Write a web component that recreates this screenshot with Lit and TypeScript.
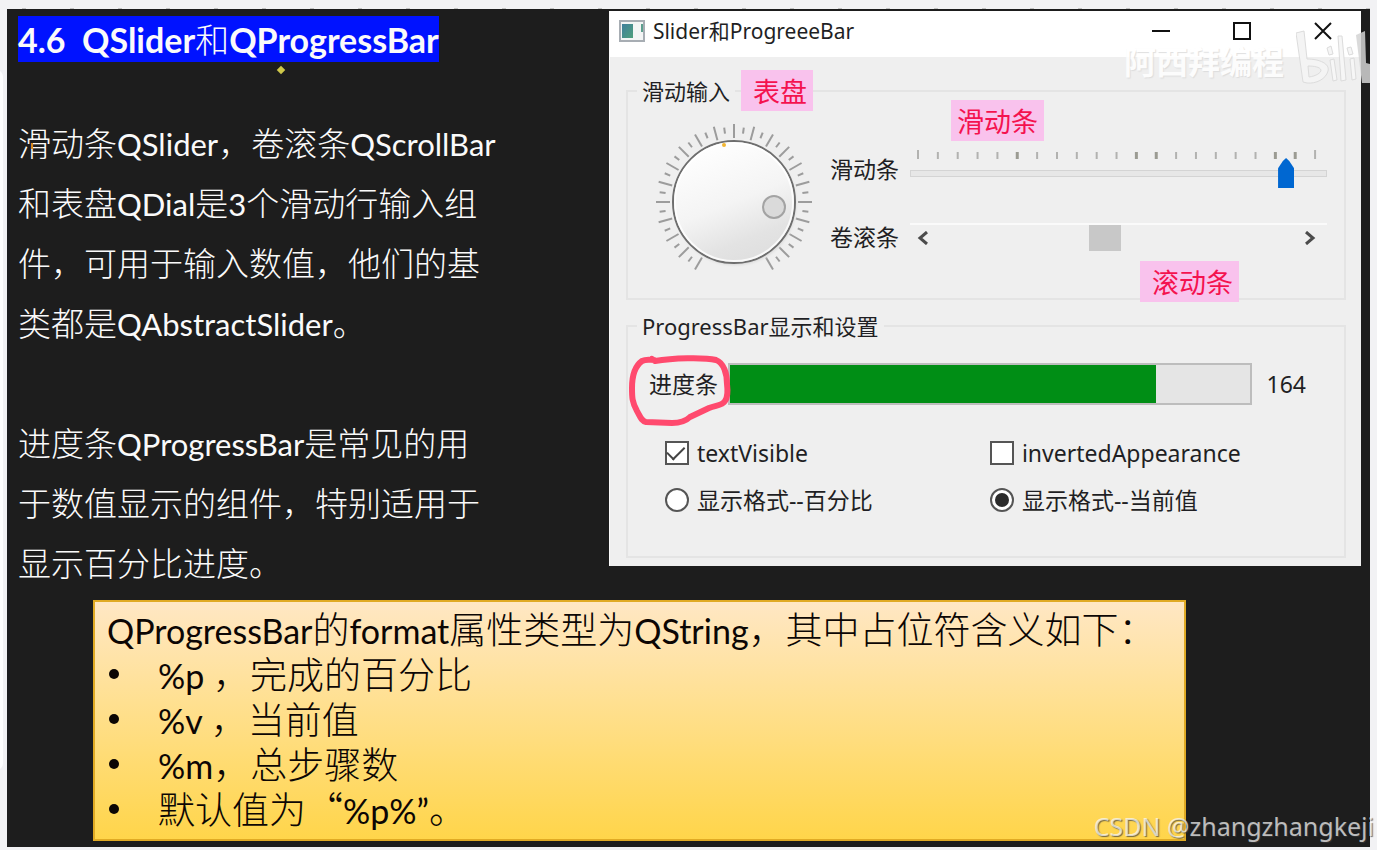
import { LitElement, html, svg, css } from "lit";
import { customElement, property } from "lit/decorators.js";

/** Wraps the Latin runs of a mixed line so that they take their own face and size. */
const mixed = (text: string) =>
  text
    .split(/([\x20-\x7e”]+)/)
    .filter((part) => part !== "")
    .map((part) => (/^[\x20-\x7e”]+$/.test(part) ? html`<span class="latin">${part}</span>` : part));

@customElement("qt-dial")
class QtDial extends LitElement {
  @property({ type: Number }) value = 0;

  static styles = css`
    :host { display: block; position: relative; width: 160px; height: 160px; }
    svg { display: block; width: 100%; height: 100%; }
    .range { position: absolute; inset: 0; width: 100%; height: 100%; margin: 0; opacity: 0; cursor: pointer; }
    .tick { stroke: #9c9c9c; stroke-width: 2; }
  `;

  render() {
    const ticks = Array.from({ length: 41 }, (_, i) => i);
    return html`
      <svg viewBox="-80 -80 160 160" aria-hidden="true">
        <defs>
          <linearGradient id="face" x1="0.3" y1="0" x2="0.7" y2="1">
            <stop offset="0" stop-color="#ffffff" />
            <stop offset="0.5" stop-color="#f4f4f4" />
            <stop offset="0.8" stop-color="#e3e3e3" />
            <stop offset="1" stop-color="#dedede" />
          </linearGradient>
          <radialGradient id="shade">
            <stop offset="0.9" stop-color="#bdbdbd" />
            <stop offset="1" stop-color="#efefef" stop-opacity="0" />
          </radialGradient>
        </defs>
        ${ticks.map(
          (i) => svg`<line class="tick" x1="0" x2="0" y1=${i % 2 ? -69 : -64} y2=${i % 2 ? -75 : -78}
            transform="rotate(${-150 + i * 7.5})" />`
        )}
        <circle cx="1" cy="2" r="64" fill="url(#shade)" />
        <circle r="61" fill="url(#face)" stroke="#6e6e6e" stroke-width="2" />
        <circle r="59" fill="none" stroke="#ffffff" stroke-width="2" opacity="0.8" />
        <circle cx="40" cy="5" r="11" fill="#dadada" stroke="#a3a3a3" stroke-width="2" />
        <circle cx="-10" cy="-57" r="2" fill="#f2b632" />
      </svg>
      <input class="range" type="range" min="0" max="200" .value=${String(this.value)} aria-label="表盘" />
    `;
  }
}

@customElement("qt-window")
class QtWindow extends LitElement {
  static styles = css`
    :host {
      display: block;
      position: relative;
      background: #efefef;
      color: #1f1f24;
      font: 23px/28px "Noto Sans", "Noto Sans CJK SC", sans-serif;
      padding-bottom: 8px;
      box-sizing: border-box;
      border-left: 1px solid #fafafa;
    }
    * { box-sizing: border-box; }
    .bar { display: flex; align-items: center; height: 46px; background: #fff; padding: 0 0 6px 9px; }
    .app-icon { width: 26px; height: 22px; margin-right: 8px; }
    .caption { flex: 1; font-size: 21px; }
    .caps { display: flex; gap: 5px; }
    .cap { width: 76px; height: 40px; padding: 0; border: 0; background: none; display: grid; place-items: center; }
    .cap svg { width: 18px; height: 18px; fill: none; stroke: #111; stroke-width: 2; }
    fieldset { margin: 0 15px 0 16px; padding: 0; border: 2px solid #e4e4e4; min-width: 0; }
    .inputs { margin-top: 20px; height: 223px; }
    .progress { margin-top: 12px; height: 246px; }
    legend { margin-left: 9px; padding: 0 5px; font-size: 22px; }
    .sliders { display: flex; gap: 16px; padding: 17px 17px 0 26px; }
    .rows { flex: 1; display: grid; grid-template-columns: auto 1fr; grid-auto-rows: 68px; column-gap: 11px; align-items: center; padding-top: 13px; min-width: 0; }
    .slider { display: grid; }
    .ticks { width: calc(100% - 20px); height: 9px; margin-left: 8px; overflow: visible; }
    .ticks line { stroke: #b2b2b0; stroke-width: 2; }
    .ticks line.bold { stroke: #9b9b92; stroke-width: 3; }
    input, progress { margin: 0; }
    .track { appearance: none; width: 100%; height: 30px; background: none; }
    .track::-webkit-slider-runnable-track { height: 7px; border: 1px solid #d4d4d4; background: #e7e7e7; }
    .track::-webkit-slider-thumb { appearance: none; width: 16px; height: 30px; margin-top: -13px; background: #0067d1; clip-path: polygon(50% 0, 70% 10%, 100% 34%, 100% 100%, 0 100%, 0 34%, 30% 10%); }
    .scroll { display: flex; height: 28px; border-top: 2px solid #fafafa; }
    .step { width: 26px; padding: 0; border: 0; background: none; display: grid; place-items: center; }
    .step.next { width: 34px; }
    .step svg { width: 12px; height: 14px; fill: none; stroke: #4b4b4b; stroke-width: 3; }
    .thumb { appearance: none; flex: 1; min-width: 0; height: 26px; background: none; }
    .thumb::-webkit-slider-thumb { appearance: none; width: 32px; height: 26px; background: #c8c8c8; }
    .meter { display: flex; align-items: center; padding: 23px 38px 0 21px; }
    .meter progress { appearance: none; flex: 1; min-width: 0; height: 42px; margin: 0 15px 0 10px; border: 2px solid #bdbdbd; background: #e5e5e5; }
    .meter progress::-webkit-progress-bar { background: #e5e5e5; }
    .meter progress::-webkit-progress-value { background: #008e15; }
    .options { display: grid; grid-template-columns: 325px 1fr; grid-auto-rows: 47px; padding: 24px 0 0 37px; }
    .option { display: flex; align-items: center; gap: 8px; }
    .box { appearance: none; width: 24px; height: 24px; border: 2px solid #555; background: #fff; display: grid; place-items: center; flex: none; }
    .box.round { border-radius: 50%; }
    .box.round:checked::before { content: ""; width: 14px; height: 14px; border-radius: 50%; background: #2b2b2b; }
    .box.square:checked::before { content: ""; width: 15px; height: 8px; border: solid #444; border-width: 0 0 2px 2px; transform: rotate(-45deg) translate(1px, -2px); }
    .note { position: absolute; background: #f9c2ed; color: #f4124f; font: 27px/41px "Noto Sans CJK SC", sans-serif; padding: 0 6px; }
    .note.wide { padding-left: 12px; }
    .note.dial { left: 131px; top: 59px; }
    .note.slide { left: 341px; top: 89px; }
    .note.scrolling { left: 530px; top: 250px; }
    .ring { position: absolute; left: 14px; top: 339px; width: 110px; height: 80px; fill: none; stroke: #ff4a6e; stroke-width: 6; stroke-linejoin: round; stroke-linecap: round; pointer-events: none; }
  `;

  render() {
    const bold = new Set([5, 11, 12, 18, 19]);
    return html`
      <header class="bar">
        <svg class="app-icon" viewBox="0 0 26 22" aria-hidden="true">
          <defs>
            <linearGradient id="pane" x1="0" y1="0" x2="1" y2="1">
              <stop offset="0" stop-color="#3f7f9c" />
              <stop offset="1" stop-color="#4fa07c" />
            </linearGradient>
          </defs>
          <rect x="1" y="1" width="24" height="20" fill="#f3f5f5" stroke="#a7adb3" stroke-width="2" />
          <rect x="3" y="4" width="11" height="14" fill="url(#pane)" />
          <rect x="22" y="4" width="2" height="8" fill="#5d9f8e" />
        </svg>
        <span class="caption">Slider和ProgreeeBar</span>
        <div class="caps">
          <button class="cap" aria-label="最小化"><svg viewBox="0 0 18 18"><path d="M0 9H18" /></svg></button>
          <button class="cap" aria-label="最大化"><svg viewBox="0 0 18 18"><rect x="1" y="1" width="16" height="16" /></svg></button>
          <button class="cap" aria-label="关闭"><svg viewBox="0 0 18 18"><path d="M1 1L17 17M17 1L1 17" /></svg></button>
        </div>
      </header>

      <fieldset class="inputs">
        <legend>滑动输入</legend>
        <div class="sliders">
          <qt-dial .value=${110}></qt-dial>
          <div class="rows">
            <label for="slider">滑动条</label>
            <div class="slider">
              <svg class="ticks" aria-hidden="true">
                ${Array.from({ length: 21 }, (_, i) => i).map(
                  (i) => svg`<line class=${bold.has(i) ? "bold" : ""} x1="${i * 5}%" x2="${i * 5}%" y1=${i % 20 ? 2 : 0} y2="9" />`
                )}
              </svg>
              <input id="slider" class="track" type="range" min="0" max="200" value="184" />
            </div>
            <label for="scroll">卷滚条</label>
            <div class="scroll">
              <button class="step" aria-label="减小"><svg viewBox="0 0 12 14"><path d="M10 1L3 7L10 13" /></svg></button>
              <input id="scroll" class="thumb" type="range" min="0" max="200" value="94" />
              <button class="step next" aria-label="增大"><svg viewBox="0 0 12 14"><path d="M2 1L9 7L2 13" /></svg></button>
            </div>
          </div>
        </div>
      </fieldset>

      <fieldset class="progress">
        <legend>ProgressBar显示和设置</legend>
        <div class="meter">
          <label for="bar">进度条</label>
          <progress id="bar" max="200" value="164"></progress>
          <output for="slider">164</output>
        </div>
        <div class="options">
          <label class="option"><input class="box square" type="checkbox" checked />textVisible</label>
          <label class="option"><input class="box square" type="checkbox" />invertedAppearance</label>
          <label class="option"><input class="box round" type="radio" name="format" />显示格式--百分比</label>
          <label class="option"><input class="box round" type="radio" name="format" checked />显示格式--当前值</label>
        </div>
      </fieldset>

      <span class="note wide dial">表盘</span>
      <span class="note slide">滑动条</span>
      <span class="note wide scrolling">滚动条</span>
      <svg class="ring" viewBox="624 350 110 80" aria-hidden="true">
        <path d="M652 359L655 361C672 358 704 357 716 360C724 363 727 374 727 384C728 392 728 397 725 401C722 406 716 405 709 408L690 417C685 422 678 423 672 423L646 422C641 421 640 416 637 411C632 402 632 397 632 388C632 377 635 366 642 361C646 359 650 360 654 360" />
      </svg>
    `;
  }
}

@customElement("app-root")
class AppRoot extends LitElement {
  static styles = css`
    :host {
      display: flex;
      position: relative;
      min-height: 100vh;
      box-sizing: border-box;
      padding: 9px 7px 3px;
      background: #f2f2f4;
      font-family: Lato, "Noto Sans CJK SC", sans-serif;
      overflow: hidden;
    }
    * { box-sizing: border-box; }
    :host::before { content: ""; position: absolute; left: -10px; top: 70px; width: 13px; height: 700px; border-radius: 10px; background: #fff; }
    :host::after { content: ""; position: absolute; left: 22px; right: 0; top: 8px; height: 1px; background: repeating-linear-gradient(90deg, #c4c4c4 0 4px, transparent 4px 48px); }
    .slide { flex: 1; min-width: 0; background: #1d1d1d; color: #fafafa; padding: 2px 9px 6px 11px; }
    .top { display: flex; justify-content: space-between; align-items: flex-start; }
    .text { font-family: "Noto Sans CJK SC", sans-serif; font-size: 33px; line-height: 60px; font-weight: 300; white-space: nowrap; }
    .latin { font-family: Lato, sans-serif; line-height: 1; white-space: pre; }
    h1 { display: table; margin: 5px 0 50px; font-size: 34px; line-height: 46px; font-weight: 300; background: #0012ff; white-space: pre; }
    h1 .latin { font-weight: 700; font-size: 34px; }
    p { margin: 0; }
    p + p { margin-top: 60px; }
    .text p .latin { font-size: 31px; font-weight: 400; }
    qt-window { width: 56%; }
    .box {
      margin: 8px 175px 0 75px;
      border: 2px solid #e0aa24;
      padding: 4px 12px 8px;
      background: linear-gradient(#ffe7c4, #ffdf8a 48%, #ffd54a);
      color: #0c0604;
      font-family: "Noto Sans CJK SC", sans-serif;
      font-size: 37px;
      line-height: 45px;
      font-weight: 300;
      white-space: nowrap;
    }
    .box .latin { font-size: 34px; font-weight: 400; }
    ul { margin: 0; padding: 0; list-style: none; }
    li { display: flex; align-items: center; }
    li::before { content: ""; width: 10px; height: 10px; border-radius: 50%; background: #0c0604; margin: 0 39px 0 2px; }
    .dot { position: absolute; left: 278px; top: 67px; width: 6px; height: 6px; background: #cfc84a; transform: rotate(45deg); }
    .speck { position: absolute; left: 31px; top: 143px; width: 2px; height: 6px; background: #d98a1c; }
    .brand { position: absolute; right: 0; top: 30px; width: 253px; display: flex; color: #fff; }
    .brand span { font: 700 32px/60px "Noto Sans CJK SC", sans-serif; opacity: 0.85; text-shadow: 1px 1px 1px #dadada; }
    .brand svg { width: 74px; height: 56px; margin-left: 12px; fill: none; }
    .credit { position: absolute; right: 3px; bottom: 9px; font: 25px/30px "Noto Sans", sans-serif; color: rgba(255, 255, 255, 0.7); text-shadow: 1px 1px 1px rgba(60, 60, 60, 0.7); }
  `;

  render() {
    const first = ["滑动条QSlider，卷滚条QScrollBar", "和表盘QDial是3个滑动行输入组", "件，可用于输入数值，他们的基", "类都是QAbstractSlider。"];
    const second = ["进度条QProgressBar是常见的用", "于数值显示的组件，特别适用于", "显示百分比进度。"];
    const items = ["%p ，完成的百分比", "%v ，当前值", "%m，总步骤数", "默认值为“%p%”。"];
    return html`
      <main class="slide">
        <div class="top">
          <section class="text">
            <h1>${mixed("4.6  QSlider和QProgressBar")}</h1>
            <p>${first.map((line) => html`${mixed(line)}<br />`)}</p>
            <p>${second.map((line) => html`${mixed(line)}<br />`)}</p>
          </section>
          <qt-window></qt-window>
        </div>
        <section class="box">
          <p>${mixed("QProgressBar的format属性类型为QString，其中占位符含义如下：")}</p>
          <ul>
            ${items.map((item) => html`<li><span>${mixed(item)}</span></li>`)}
          </ul>
        </section>
      </main>
      <i class="dot"></i>
      <i class="speck"></i>
      <div class="brand">
        <span>阿西拜编程</span>
        <svg viewBox="0 0 74 56" aria-hidden="true">
          <g stroke="#dcdcdc" stroke-width="1">
            <path fill="#f4f4f4" d="M0 3L8 1L11 29C24 29 34 34 32 41C30 49 20 54 11 53L7 52Z" />
            <path fill="#efefef" d="M12 36L13 47C20 46 25 43 25 40C24 37 18 36 12 36Z" />
            <path fill="#f6f6f6" d="M31 18L35 16L37 24L33 25ZM42 6L46 6L50 50L45 51ZM51 18L55 17L57 24L53 25ZM34 30L38 29L41 50L37 51ZM54 29L58 28L60 49L56 50Z" />
          </g>
          <path fill="#d4d4d4" opacity="0.85" d="M60 5L69 1L70 33L74 34V53H66Z" />
        </svg>
      </div>
      <div class="credit">CSDN @zhangzhangkeji</div>
    `;
  }
}
